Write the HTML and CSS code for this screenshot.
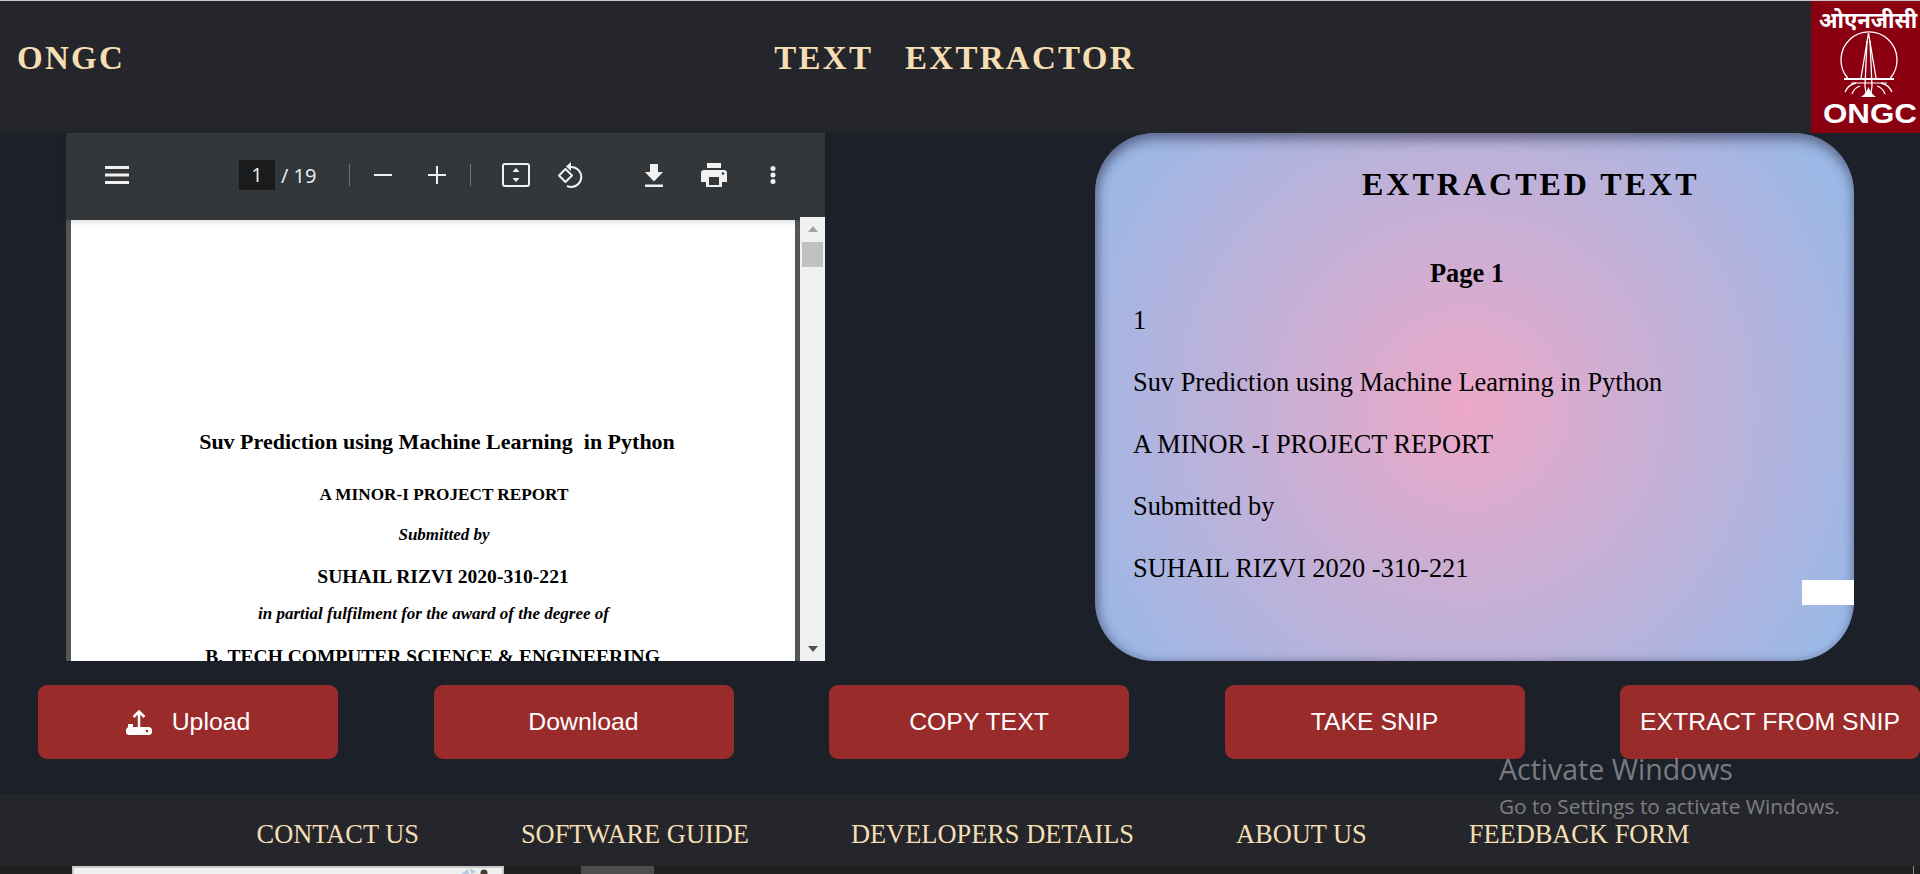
FILE: index.html
```html
<!DOCTYPE html>
<html lang="en">
<head>
    <meta charset="UTF-8">
    <meta name="viewport" content="width=device-width, initial-scale=1.0">
    <title>ONGC Text Extractor</title>
    <link rel="stylesheet" href="styles.css">
</head>
<body>
    <header class="topbar">
        <div class="brand">ONGC</div>
        <div class="app-title">TEXT&nbsp;&nbsp; EXTRACTOR</div>
        <div class="logo">
            <svg viewBox="0 0 109 132" width="109" height="132">
                <rect width="109" height="132" fill="#8b0011"/>
                <text class="logo-hi" x="57" y="27" text-anchor="middle">ओएनजीसी</text>
                <g fill="none" stroke="#fff" stroke-width="1.300">
                    <path d="M36.600 77 A 28 28 0 1 1 79.400 77"/>
                    <path d="M57.500 32 L50 77 M57.500 32 L65 77"/>
                    <path d="M56 40 L54 85 L55 92 M59 40 L61 85 L60 92"/>
                    <path d="M33 78 H83" stroke-width="2"/>
                    <path d="M40 82 H76" stroke-width="1"/>
                    <path d="M49 85 Q43 87 41 93 M45 82 Q37 84 34 91 M66 85 Q72 87 74 93 M70 82 Q78 84 81 91"/>
                </g>
                <path d="M50 96 Q55 93 57.500 86 Q60 93 65 96 Z" fill="#fff"/>
                <text class="logo-en" x="59" y="122" text-anchor="middle" textLength="94" lengthAdjust="spacingAndGlyphs">ONGC</text>
            </svg>
        </div>
    </header>

    <main class="workspace">
        <section class="viewer">
            <div class="viewer-bar">
                <svg class="menu-ico" viewBox="0 0 24 18" width="24" height="18"><path d="M0 0h24v3H0zM0 7.500h24v3H0zM0 15h24v3H0z" fill="#f1f1f1"/></svg>
                <span class="page-box">1</span>
                <span class="page-total">/ 19</span>
                <span class="bar-sep"></span>
                <svg class="minus-ico" viewBox="0 0 18 18" width="18" height="18"><path d="M0 8h18v2H0z" fill="#f1f1f1"/></svg>
                <svg class="plus-ico" viewBox="0 0 18 18" width="18" height="18"><path d="M0 8h8V0h2v8h8v2h-8v8H8v-8H0z" fill="#f1f1f1"/></svg>
                <span class="bar-sep sep-two"></span>
                <svg class="fit-ico" viewBox="0 0 28 24" width="28" height="24"><rect x="1" y="1" width="26" height="22" rx="2" fill="none" stroke="#f1f1f1" stroke-width="2"/><path d="M14 5l3.500 4h-7zM14 19l-3.500-4h7z" fill="#f1f1f1"/></svg>
                <svg class="rotate-ico" viewBox="0 0 28 26" width="28" height="26"><path d="M10.500 7l6.500 6.500-6.500 6.500L4 13.500z" fill="none" stroke="#f1f1f1" stroke-width="2" stroke-linejoin="round"/><path d="M15 5a10 10 0 1 1-3 19" fill="none" stroke="#f1f1f1" stroke-width="2"/><path d="M16 0v9l-5-4.500z" fill="#f1f1f1"/></svg>
                <svg class="save-ico" viewBox="0 0 18 23" width="18" height="23"><path d="M5 0h8v8h5l-9 9.500L0 8h5zM0 20.500h18V23H0z" fill="#f1f1f1"/></svg>
                <svg class="print-ico" viewBox="0 0 26 24" width="26" height="24"><path d="M6 0h14v5H6zM3 7h20a3 3 0 0 1 3 3v9h-5v5H5v-5H0v-9a3 3 0 0 1 3-3z" fill="#f1f1f1"/><rect x="8" y="14" width="10" height="8" fill="#33373a"/><circle cx="22" cy="10.500" r="1.300" fill="#33373a"/></svg>
                <svg class="more-ico" viewBox="0 0 6 18" width="6" height="18"><circle cx="3" cy="2.500" r="2.500" fill="#f1f1f1"/><circle cx="3" cy="9" r="2.500" fill="#f1f1f1"/><circle cx="3" cy="15.500" r="2.500" fill="#f1f1f1"/></svg>
            </div>
            <div class="viewer-body">
                <div class="pdf-page">
                    <p class="pdf-title">Suv Prediction using Machine Learning&nbsp; in Python</p>
                    <p class="pdf-sub">A MINOR-I PROJECT REPORT</p>
                    <p class="pdf-by">Submitted by</p>
                    <p class="pdf-name">SUHAIL RIZVI 2020-310-221</p>
                    <p class="pdf-for">in partial fulfilment for the award of the degree of</p>
                    <p class="pdf-deg">B. TECH COMPUTER SCIENCE &amp; ENGINEERING</p>
                </div>
                <div class="pdf-scroll">
                    <span class="arrow-up"></span>
                    <span class="thumb"></span>
                    <span class="arrow-down"></span>
                </div>
            </div>
        </section>

        <section class="result-card">
            <h2 class="result-head">EXTRACTED TEXT</h2>
            <h3 class="result-page">Page 1</h3>
            <p>1</p>
            <p>Suv Prediction using Machine Learning in Python</p>
            <p>A MINOR -I PROJECT REPORT</p>
            <p>Submitted by</p>
            <p>SUHAIL RIZVI 2020 -310-221</p>
            <span class="white-chip"></span>
        </section>
    </main>

    <div class="actions">
        <button class="btn">
            <svg class="up-ico" viewBox="0 0 26 25" width="26" height="25">
                <path d="M7.500 7L13 1.500 18.500 7M13 2v16" fill="none" stroke="#fff" stroke-width="2.500"/>
                <path d="M2 14h5v4H2z" fill="#fff"/>
                <rect y="17" width="26" height="8" rx="3.500" fill="#fff"/>
                <circle cx="21" cy="21" r="1.300" fill="#992b2b"/>
            </svg>
            Upload
        </button>
        <button class="btn">Download</button>
        <button class="btn">COPY TEXT</button>
        <button class="btn">TAKE SNIP</button>
        <button class="btn">EXTRACT FROM SNIP</button>
    </div>

    <footer class="footer">
        <a href="#">CONTACT US</a>
        <a href="#">SOFTWARE GUIDE</a>
        <a href="#">DEVELOPERS DETAILS</a>
        <a href="#">ABOUT US</a>
        <a href="#">FEEDBACK FORM</a>
    </footer>

    <div class="under-strip">
        <div class="under-window">
            <svg viewBox="0 0 30 6" width="30" height="6"><path d="M3 6L10 1l1 5zM12 0l6 4-5 2z" fill="#b9cbe0"/><circle cx="26" cy="5" r="3.500" fill="#4a3a36"/></svg>
        </div>
        <div class="under-block"></div>
        <div class="under-line"></div>
    </div>

    <div class="watermark">
        <div class="wm-big">Activate Windows</div>
        <div class="wm-small">Go to Settings to activate Windows.</div>
    </div>
</body>
</html>
```

FILE: styles.css
```css
html, body {
    height: 874px;
    overflow: hidden;
}
body {
    margin: 0;
    background-color: #1c2029;
    font-family: "Liberation Serif", serif;
    border-top: 1px solid #c9c9c9;
    box-sizing: border-box;
}

/* header */
.topbar {
    height: 132px;
    background-color: #24262b;
    display: flex;
    align-items: center;
    justify-content: space-between;
    color: #f5deb3;
    font-weight: bold;
    font-size: 33px;
    letter-spacing: 2.300px;
}
.brand {
    margin-left: 17px;
    margin-top: -18px;
}
.app-title {
    margin-top: -18px;
    margin-left: -26px;
}
.logo {
    width: 109px;
    height: 132px;
}
.logo svg {
    display: block;
}
.logo-hi {
    font-family: "Noto Sans", "DejaVu Sans", sans-serif;
    font-weight: bold;
    font-size: 22px;
    letter-spacing: 0;
    fill: #fff;
}
.logo-en {
    font-family: "Liberation Sans", sans-serif;
    font-weight: bold;
    font-size: 28px;
    letter-spacing: 0;
    fill: #fff;
}

/* main row */
.workspace {
    height: 528px;
    padding: 0 66px;
    display: flex;
    justify-content: space-between;
}

/* pdf viewer */
.viewer {
    width: 759px;
    display: flex;
    flex-direction: column;
    background-color: #525659;
}
.viewer-bar {
    height: 87px;
    box-sizing: border-box;
    padding-bottom: 3px;
    flex-shrink: 0;
    background-color: #33373a;
    position: relative;
    z-index: 1;
    box-shadow: 0 2px 5px rgba(0, 0, 0, .15);
    display: flex;
    align-items: center;
    color: #f1f1f1;
    font-family: "Open Sans", sans-serif;
    font-size: 20px;
}
.menu-ico { margin-left: 39px; }
.page-box {
    margin-left: 110px;
    width: 36px;
    height: 30px;
    line-height: 30px;
    text-align: center;
    background-color: #191b1c;
}
.page-total { margin-left: 6px; width: 36px; white-space: nowrap; }
.bar-sep {
    width: 1px;
    height: 22px;
    background-color: #6f7375;
    margin-left: 32px;
}
.minus-ico { margin-left: 24px; }
.plus-ico { margin-left: 36px; }
.sep-two { margin-left: 24px; }
.fit-ico { margin-left: 31px; }
.rotate-ico { margin-left: 25px; }
.save-ico { margin-left: 62px; }
.print-ico { margin-left: 38px; }
.more-ico { margin-left: 43px; }

.viewer-body {
    flex: 1;
    min-height: 0;
    display: flex;
    padding-left: 5px;
}
.pdf-page {
    width: 724px;
    background-color: #fff;
    color: #000;
    overflow: hidden;
    text-align: center;
    font-weight: bold;
    padding-top: 210px;
    box-sizing: border-box;
}
.pdf-page p {
    margin: 0;
    white-space: nowrap;
}
.pdf-title {
    font-size: 22px;
    line-height: 24px;
    padding-left: 8px;
}
.pdf-page .pdf-sub {
    font-size: 17.200px;
    line-height: 18px;
    margin-top: 32px;
    padding-left: 22px;
}
.pdf-page .pdf-by {
    font-size: 17px;
    font-style: italic;
    line-height: 18px;
    margin-top: 22px;
    padding-left: 22px;
}
.pdf-page .pdf-name {
    font-size: 19.600px;
    line-height: 22px;
    margin-top: 22px;
    padding-left: 20px;
}
.pdf-page .pdf-for {
    font-size: 17px;
    font-style: italic;
    line-height: 18px;
    margin-top: 17px;
    padding-left: 1px;
}
.pdf-page .pdf-deg {
    font-size: 19.500px;
    line-height: 22px;
    margin-top: 23px;
    padding-right: 1px;
}

.pdf-scroll {
    width: 25px;
    margin-left: 5px;
    margin-top: -3px;
    position: relative;
    z-index: 2;
    background-color: #f0f0f0;
    display: flex;
    flex-direction: column;
    align-items: center;
}
.arrow-up {
    margin-top: 9px;
    border: 5.500px solid transparent;
    border-top: 0;
    border-bottom: 6px solid #a3a3a3;
}
.thumb {
    width: 21px;
    height: 25px;
    margin-top: 10px;
    background-color: #c1c1c1;
}
.arrow-down {
    margin-top: auto;
    margin-bottom: 9px;
    border: 5.500px solid transparent;
    border-bottom: 0;
    border-top: 6px solid #505050;
}

/* extracted text */
.result-card {
    width: 759px;
    box-sizing: border-box;
    position: relative;
    padding: 0 38px;
    border-radius: 60px;
    color: #000;
    font-size: 26.400px;
    background: radial-gradient(circle farthest-corner at 49% 52%, #eca8c8, #9bb8e6 90%);
    box-shadow: inset 0 8px 12px rgba(50, 50, 80, .45), inset 5px 0 10px rgba(60, 60, 90, .3), inset -3px 0 6px rgba(60, 60, 90, .1);
}
.result-card p {
    margin: 0;
    height: 62px;
    line-height: 28px;
}
.result-head {
    margin: 30px 0 0;
    padding-left: 229px;
    font-size: 32px;
    letter-spacing: 3px;
    line-height: 42px;
}
.result-page {
    margin: 54px 0 0;
    font-size: 26.400px;
    line-height: 28px;
    text-align: center;
    padding-right: 15px;
    height: 47px;
}
.white-chip {
    position: absolute;
    right: 0;
    top: 447px;
    width: 52px;
    height: 25px;
    background-color: #fff;
}

/* buttons */
.actions {
    margin-top: 24px;
    padding-left: 38px;
    display: flex;
    justify-content: space-between;
}
.btn {
    width: 300px;
    height: 74px;
    border: 0;
    border-radius: 9px;
    background-color: #992b2b;
    color: #fff;
    font-family: "Liberation Sans", sans-serif;
    font-size: 24.800px;
    display: flex;
    align-items: center;
    justify-content: center;
    padding: 0;
}
.up-ico { margin-right: 20px; }

/* footer */
.footer {
    margin-top: 35px;
    height: 72px;
    background-color: #24262b;
    display: flex;
    align-items: center;
    justify-content: center;
    gap: 102px;
    padding-top: 8px;
    padding-left: 26px;
    box-sizing: border-box;
}
.footer a {
    color: #f5deb3;
    text-decoration: none;
    font-size: 26.400px;
}

.under-strip {
    height: 8px;
    background-color: #1f2020;
    display: flex;
    overflow: hidden;
}
.under-window {
    width: 432px;
    height: 8px;
    margin-left: 72px;
    box-sizing: border-box;
    background-color: #f0f0f0;
    border: 2px solid #c8c8c8;
    border-bottom: 0;
    display: flex;
    justify-content: flex-end;
    padding-right: 14px;
}
.under-block {
    width: 73px;
    margin-left: 77px;
    background-color: #4d4d4d;
}
.under-line {
    width: 1px;
    margin-left: auto;
    margin-right: 6px;
    background-color: #8a8a8a;
}

/* windows notice */
.watermark {
    position: absolute;
    left: 1499px;
    top: 751px;
    color: rgba(255, 255, 255, .42);
    font-family: "Open Sans", sans-serif;
}
.wm-big {
    font-size: 28.500px;
    line-height: 36px;
}
.wm-small {
    font-size: 20.800px;
    line-height: 26px;
    margin-top: 6px;
}
```
